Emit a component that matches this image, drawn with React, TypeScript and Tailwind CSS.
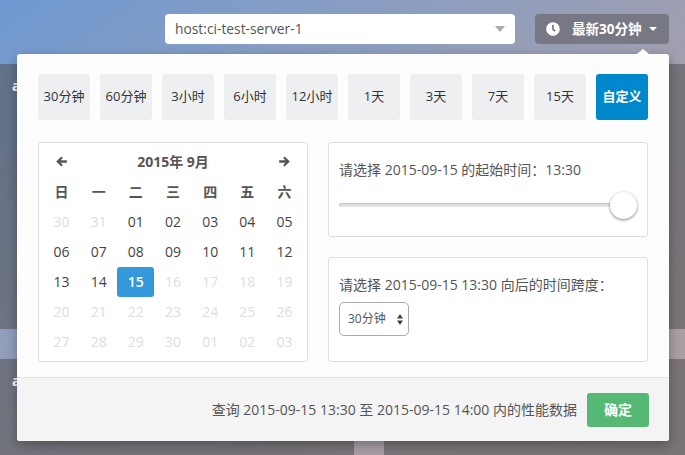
import { FaClock } from "react-icons/fa";

const ranges = ["30分钟", "60分钟", "3小时", "6小时", "12小时", "1天", "3天", "7天", "15天"];
const weekdays = ["日", "一", "二", "三", "四", "五", "六"];
const days: [string, boolean][] = [
  ["30", true], ["31", true], ["01", false], ["02", false], ["03", false], ["04", false], ["05", false],
  ["06", false], ["07", false], ["08", false], ["09", false], ["10", false], ["11", false], ["12", false],
  ["13", false], ["14", false], ["15", false], ["16", true], ["17", true], ["18", true], ["19", true],
  ["20", true], ["21", true], ["22", true], ["23", true], ["24", true], ["25", true], ["26", true],
  ["27", true], ["28", true], ["29", true], ["30", true], ["01", true], ["02", true], ["03", true],
];

function Arrow({ flip }: { flip?: boolean }) {
  return (
    <svg width="11" height="11" viewBox="0 0 11 11" className={flip ? "rotate-180 fill-[#555]" : "fill-[#555]"}>
      <path d="M5.4 0.6 6.9 2.1 4.6 4.2H10.8V6.8H4.6L6.9 8.9 5.4 10.4 0.2 5.5Z" />
    </svg>
  );
}

function Card({ label }: { label?: string }) {
  return (
    <div className="bg-[#4d4d4d]/[0.53] pl-3 pt-[12px] text-[14px] font-bold leading-[20px] text-white">{label}</div>
  );
}

export default function App() {
  return (
    <div className="relative h-[455px] w-[685px] overflow-hidden bg-gradient-to-br from-[#6f9ad2] via-[#a49fac] via-60% to-[#ae9ea2] font-['Open_Sans','Noto_Sans_CJK_SC',sans-serif] text-[14px] text-[#555]">
      <div className="flex h-[64px] items-start justify-end gap-5 pr-4 pt-[14px]">
        <div className="flex h-[30px] w-[350px] items-center justify-between rounded bg-white pl-[10px] pr-[10px] text-[13.8px] text-[#555]">
          <span>host:ci-test-server-1</span>
          <span className="h-0 w-0 border-x-[5px] border-t-[6px] border-x-transparent border-t-[#aaa]" />
        </div>
        <div className="flex h-[30px] w-[134px] items-center rounded bg-[#777884] pl-[11px] font-bold text-white">
          <FaClock className="mr-[12px] h-[14px] w-[14px]" />
          <span className="text-[13.5px]">最新30分钟</span>
          <span className="ml-[8px] h-0 w-0 border-x-[4px] border-t-[4px] border-x-transparent border-t-white" />
        </div>
      </div>

      <div className="grid h-[391px] grid-cols-[354px_301px] grid-rows-[265px_96px] gap-[30px]">
        <Card label="a" />
        <Card />
        <Card label="a" />
        <Card />
      </div>

      <div className="absolute left-[17px] top-[54px] w-[652px] rounded-[3px] bg-[#fdfdfd] shadow-[0_4px_12px_rgba(0,0,0,0.3)]">
        <div className="absolute -top-[5px] right-[20px] h-0 w-0 border-x-[6px] border-b-[5px] border-x-transparent border-b-[#fdfdfd]" />
        <div className="px-[21px] pb-[15px] pt-[20px]">
          <div className="flex gap-[10px]">
            {ranges.map((r) => (
              <div key={r} className="flex h-[46px] w-[52px] items-center justify-center rounded-[3px] bg-[#eeeff1] text-[13px] text-[#333]">
                {r}
              </div>
            ))}
            <div className="flex h-[46px] w-[52px] items-center justify-center rounded-[3px] bg-[#0088cc] text-[13px] font-semibold text-white">
              自定义
            </div>
          </div>

          <div className="mt-[22px] flex gap-5">
            <div className="h-[220px] w-[270px] rounded-[3px] border border-[#ddd] bg-white p-1 text-[#444]">
              <div className="grid grid-cols-7 grid-rows-7">
                <div className="flex h-[30px] items-center justify-center pb-[1px]">
                  <Arrow />
                </div>
                <div className="col-span-5 flex h-[30px] items-center justify-center pb-[2px] text-[14px] font-bold text-[#555]">
                  2015年 9月
                </div>
                <div className="flex h-[30px] items-center justify-center pb-[1px]">
                  <Arrow flip />
                </div>
                {weekdays.map((w) => (
                  <div key={w} className="flex h-[30px] items-center justify-center pb-[2px] text-[14px] font-bold text-[#555]">
                    {w}
                  </div>
                ))}
                {days.map(([d, off], i) => (
                  <div
                    key={i}
                    className={
                      i === 16
                        ? "flex h-[30px] items-center justify-center rounded-[3px] bg-[#3498db] pb-[2px] font-semibold text-white"
                        : off
                          ? "flex h-[30px] items-center justify-center pb-[2px] text-[#ddd]"
                          : "flex h-[30px] items-center justify-center pb-[2px]"
                    }
                  >
                    {d}
                  </div>
                ))}
              </div>
            </div>

            <div className="flex w-[320px] flex-col gap-5">
              <div className="h-[95px] rounded-[3px] border border-[#ddd] bg-white px-[10px] pt-[17px]">
                <div className="leading-[20px]">请选择 2015-09-15 的起始时间：13:30</div>
                <div className="relative mt-[23px] h-[4px] w-[290px] rounded-full bg-[#e4e4e4] shadow-[inset_0_1px_2px_rgba(0,0,0,0.15)]">
                  <div className="absolute -top-[11px] right-[-8px] h-[27px] w-[27px] rounded-full bg-white shadow-[0_1px_3px_rgba(0,0,0,0.5)]" />
                </div>
              </div>
              <div className="h-[105px] rounded-[3px] border border-[#ddd] bg-white px-[10px] pt-[17px]">
                <div className="leading-[20px]">请选择 2015-09-15 13:30 向后的时间跨度：</div>
                <div className="mt-[7px] flex h-[34px] w-[70px] items-center justify-between rounded-[5px] border border-[#aaa] pl-[8px] pr-[5px] text-[12px]">
                  <span>30分钟</span>
                  <svg width="6" height="11" viewBox="0 0 6 11" className="fill-[#444]">
                    <path d="M3 0 6 4.5H0Z" />
                    <path d="M3 11 0 6.5H6Z" />
                  </svg>
                </div>
              </div>
            </div>
          </div>
        </div>

        <div className="flex h-[64px] items-center justify-end gap-[10px] rounded-b-[3px] border-t border-[#e5e5e5] bg-[#f4f4f4] pr-[20px]">
          <span>查询 2015-09-15 13:30 至 2015-09-15 14:00 内的性能数据</span>
          <div className="flex h-[34px] w-[62px] items-center justify-center rounded-[3px] bg-[#55b975] font-semibold text-white">
            确定
          </div>
        </div>
      </div>
    </div>
  );
}
